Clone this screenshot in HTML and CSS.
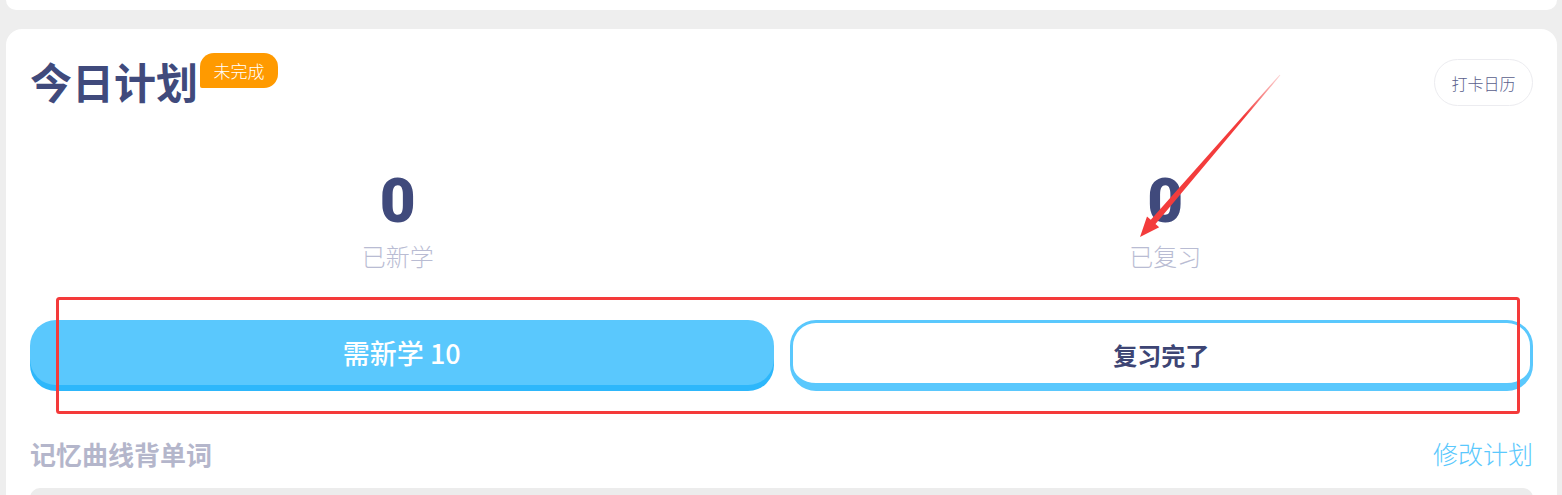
FILE: index.html
```html
<!DOCTYPE html>
<html lang="zh-CN">
<head>
    <meta charset="UTF-8">
    <meta name="viewport" content="width=device-width, initial-scale=1.0">
    <title>今日计划</title>
    <link rel="stylesheet" href="styles.css">
</head>
<body>
    <div class="page">
        <!-- bottom of the previous card -->
        <div class="prev-card"></div>

        <!-- Today's plan card -->
        <div class="card">
            <div class="card-header">
                <div class="title-wrap">
                    <h1 class="title">今日计划</h1>
                    <span class="badge">未完成</span>
                </div>
                <button class="calendar-btn">打卡日历</button>
            </div>

            <div class="stats">
                <div class="stat">
                    <div class="stat-num">0</div>
                    <div class="stat-label">已新学</div>
                </div>
                <div class="stat">
                    <div class="stat-num">0</div>
                    <div class="stat-label">已复习</div>
                </div>
            </div>

            <div class="actions">
                <button class="btn btn-primary">需新学 10</button>
                <button class="btn btn-outline">复习完了</button>
            </div>

            <div class="section-head">
                <span class="section-title">记忆曲线背单词</span>
                <a class="section-link">修改计划</a>
            </div>

            <div class="curve-box"></div>
        </div>
    </div>

    <!-- annotation marks drawn over the screenshot -->
    <svg class="marks" width="1562" height="495" viewBox="0 0 1562 495">
        <defs>
            <linearGradient id="arrowFade" x1="1280" y1="75" x2="1140" y2="237" gradientUnits="userSpaceOnUse">
                <stop offset="0" stop-color="#f33c3c" stop-opacity="0.2"/>
                <stop offset="0.25" stop-color="#f33c3c"/>
                <stop offset="1" stop-color="#f33c3c"/>
            </linearGradient>
        </defs>
        <rect x="57.5" y="298.5" width="1461" height="114" rx="2" fill="none" stroke="#f43a3a" stroke-width="3"/>
        <polygon points="1280.4,75.3 1155.5,224 1159.2,227.2 1140,237 1147,216.5 1150.8,219.8 1279.6,74.7" fill="url(#arrowFade)"/>
    </svg>
</body>
</html>
```

FILE: styles.css
```css
/* Reset default styles */
* {
    margin: 0;
    padding: 0;
    box-sizing: border-box;
}

body {
    background: #eeeeee;
    font-family: "Noto Sans CJK SC", "Noto Sans", sans-serif;
    height: 495px;
    overflow: hidden;
    position: relative;
}

.page {
    padding: 0 5px 0 6px;
}

/* Bottom edge of the card above */
.prev-card {
    height: 10px;
    background: #fff;
    border-radius: 0 0 16px 16px;
}

.card {
    margin-top: 19px;
    background: #fff;
    border-radius: 16px;
    padding: 24px 24px 0 24px;
}

/* Header: title + badge + calendar */
.card-header {
    display: flex;
    justify-content: space-between;
    align-items: flex-end;
    height: 53px;
}

.title-wrap {
    display: flex;
    align-items: flex-end;
    height: 100%;
}

.title {
    font-size: 42px;
    line-height: 50px;
    font-weight: 700;
    color: #404a7c;
}

.badge {
    align-self: flex-start;
    margin-left: 2px;
    width: 78px;
    height: 35px;
    display: flex;
    justify-content: center;
    align-items: center;
    background: #ff9a00;
    color: #fff;
    font-size: 17px;
    font-weight: 300;
    border-radius: 14px 14px 14px 2px;
}

.calendar-btn {
    width: 99px;
    height: 47px;
    border: 1px solid #ececf0;
    border-radius: 24px;
    background: #fff;
    color: #595e8c;
    font-family: inherit;
    font-size: 16px;
    font-weight: 300;
}

/* Stats */
.stats {
    display: grid;
    grid-template-columns: 1fr 1fr;
    margin: 64px -16px 0 -16px;
}

.stat {
    text-align: center;
}

.stat-num {
    font-family: Roboto, "Liberation Sans", sans-serif;
    font-size: 62px;
    line-height: 1;
    font-weight: 900;
    color: #404a7c;
}

.stat-label {
    margin-top: 10px;
    font-size: 24px;
    line-height: 1.2;
    font-weight: 300;
    color: #b9bcd3;
}

/* Action buttons */
.actions {
    display: grid;
    grid-template-columns: 1fr 1fr;
    gap: 16px;
    margin-top: 49px;
}

.btn {
    height: 71px;
    border-radius: 26px;
    font-family: inherit;
    cursor: pointer;
}

.btn-primary {
    height: 65px;
    margin-bottom: 6px;
    border: none;
    background: #5ac8fd;
    box-shadow: 0 6px 0 #2db7fb;
    color: #fff;
    font-size: 27px;
    font-weight: 500;
}

.btn-outline {
    background: #fff;
    border: 3px solid #5ac8fd;
    border-bottom-width: 8px;
    color: #3d4574;
    font-size: 24px;
    font-weight: 700;
    padding-top: 3px;
}

/* Section header */
.section-head {
    display: flex;
    justify-content: space-between;
    align-items: center;
    margin-top: 47px;
}

.section-title {
    font-size: 26px;
    line-height: 1.2;
    font-weight: 700;
    color: #b4b6cb;
}

.section-link {
    font-size: 25px;
    line-height: 1.2;
    font-weight: 300;
    color: #5ac8fd;
}

.curve-box {
    margin-top: 19px;
    height: 40px;
    background: #ececec;
    border-radius: 10px 10px 0 0;
}

/* Red annotation overlay */
.marks {
    position: absolute;
    left: 0;
    top: 0;
    pointer-events: none;
}
```
